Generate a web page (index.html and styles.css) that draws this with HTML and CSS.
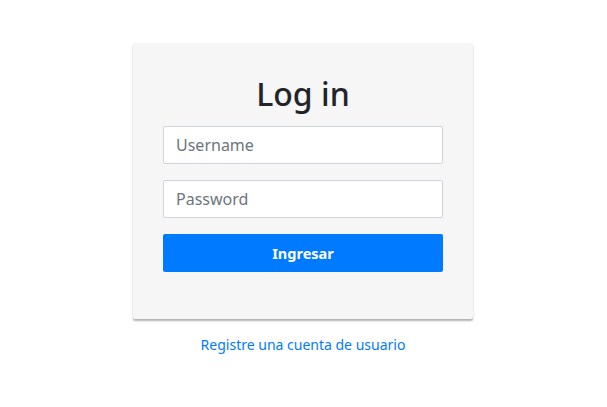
FILE: index.html
```html
<!DOCTYPE html>
<html lang="es">
<head>
<meta charset="utf-8">
<title>Log in</title>
<link rel="stylesheet" href="styles.css">
</head>
<body>
<main class="page">
  <form class="card">
    <h2 class="title">Log in</h2>
    <input class="field" type="text" placeholder="Username">
    <input class="field" type="password" placeholder="Password">
    <button class="btn" type="button">Ingresar</button>
  </form>
  <a class="link" href="#">Registre una cuenta de usuario</a>
</main>
</body>
</html>
```

FILE: styles.css
```css
* { box-sizing: border-box; }
html, body { margin: 0; padding: 0; background: #fff; }
body {
  font-family: "Noto Sans", "Open Sans", sans-serif;
  color: #212529;
}
.page {
  display: flex;
  flex-direction: column;
  align-items: center;
  padding: 43px 1px 0 0;
}
.card {
  width: 340px;
  background: #f6f6f6;
  border-radius: 2px;
  box-shadow: 0 2px 2px rgba(0,0,0,0.3);
  padding: 32px 30px 47px;
  display: flex;
  flex-direction: column;
  gap: 16px;
}
.title {
  margin: 0 0 -3px;
  font-size: 32px;
  font-weight: 500;
  line-height: 1.2;
  text-align: center;
  color: #212529;
}
.field {
  height: 38px;
  padding: 6px 12px;
  font-family: inherit;
  font-size: 16px;
  color: #495057;
  background: #fff;
  border: 1px solid #ced4da;
  border-radius: 2px;
  outline: none;
}
.field::placeholder { color: #6c757d; }
.btn {
  height: 38px;
  border: 0;
  border-radius: 2px;
  background: #007bff;
  color: #fff;
  font-family: inherit;
  font-weight: 700;
  font-size: 14.5px;
}
.link {
  margin-top: 16px;
  font-size: 14px;
  color: #007bff;
  text-decoration: none;
}
```
